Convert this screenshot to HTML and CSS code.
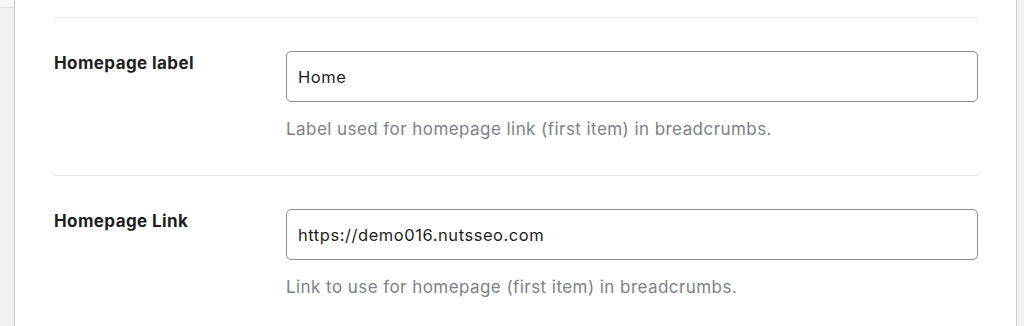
FILE: index.html
```html
<!DOCTYPE html>
<html lang="en">
<head>
<meta charset="utf-8">
<title>Breadcrumb settings</title>
<link rel="stylesheet" href="styles.css">
</head>
<body>
<div class="page">
  <aside class="side side-left">
    <div class="side-top"></div>
  </aside>
  <main class="panel">
    <div class="row">
      <label class="row-label" for="home-label">Homepage label</label>
      <div class="row-field">
        <input class="text-input" id="home-label" type="text" value="Home">
        <p class="help">Label used for homepage link (first item) in breadcrumbs.</p>
      </div>
    </div>
    <div class="row">
      <label class="row-label" for="home-link">Homepage Link</label>
      <div class="row-field">
        <input class="text-input" id="home-link" type="text" value="https://demo016.nutsseo.com">
        <p class="help">Link to use for homepage (first item) in breadcrumbs.</p>
      </div>
    </div>
  </main>
  <aside class="side side-right"></aside>
</div>
</body>
</html>
```
FILE: styles.css
```css
* { box-sizing: border-box; }
html, body {
  margin: 0;
  padding: 0;
  background: #ffffff;
  font-family: Inter, "Noto Sans", "Liberation Sans", sans-serif;
}
.page {
  display: flex;
  width: 1024px;
  height: 326px;
  overflow: hidden;
}
.side {
  background: #f0f0f1;
  flex: none;
}
.side-left {
  width: 15px;
  border-right: 1px solid #c9ccd1;
}
.side-top {
  height: 8px;
  background: #f6f7f7;
  border-bottom: 1px solid #dcdcde;
}
.side-right {
  width: 8px;
  border-left: 1px solid #c9ccd1;
}
.panel {
  flex: 1;
  background: #ffffff;
  padding: 17px 38px 0 39px;
}
.row {
  display: grid;
  grid-template-columns: 232px 1fr;
  align-items: start;
  border-top: 1px solid #e4e6ea;
  padding: 33px 0 34px;
}
.row-label {
  font-size: 17px;
  font-weight: 700;
  line-height: 24px;
  color: #1e1e1e;
  letter-spacing: 0.4px;
}
.row-field {
  display: flex;
  flex-direction: column;
}
.text-input {
  display: block;
  width: 100%;
  height: 51px;
  margin: 0;
  padding: 0 11px 0;
  border: 1px solid #8c8f94;
  border-radius: 5px;
  background: #ffffff;
  font-family: inherit;
  font-size: 16.5px;
  letter-spacing: 0.55px;
  color: #1e1e1e;
  outline: none;
}
.help {
  margin: 15px 0 0;
  font-size: 17px;
  line-height: 24px;
  letter-spacing: 0.44px;
  color: #7c8188;
}
```
